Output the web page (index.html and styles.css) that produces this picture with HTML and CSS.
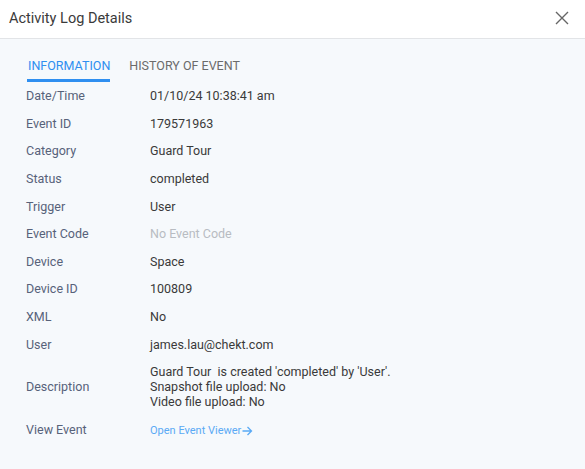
FILE: index.html
```html
<!DOCTYPE html>
<html>
<head>
<meta charset="utf-8">
<link rel="stylesheet" href="styles.css">
</head>
<body>
<div class="dialog">
  <div class="header">
    <div class="title">Activity Log Details</div>
    <svg class="close" width="14" height="14" viewBox="0 0 14 14"><path d="M1 1L13 13M13 1L1 13" stroke="#666" stroke-width="1.4" fill="none"/></svg>
  </div>
  <div class="body">
    <div class="tabs">
      <div class="tab active">INFORMATION</div>
      <div class="tab">HISTORY OF EVENT</div>
    </div>
    <div class="rows">
      <div class="row"><div class="label">Date/Time</div><div class="value">01/10/24 10:38:41 am</div></div>
      <div class="row"><div class="label">Event ID</div><div class="value">179571963</div></div>
      <div class="row"><div class="label">Category</div><div class="value">Guard Tour</div></div>
      <div class="row"><div class="label">Status</div><div class="value">completed</div></div>
      <div class="row"><div class="label">Trigger</div><div class="value">User</div></div>
      <div class="row"><div class="label">Event Code</div><div class="value muted">No Event Code</div></div>
      <div class="row"><div class="label">Device</div><div class="value">Space</div></div>
      <div class="row"><div class="label">Device ID</div><div class="value">100809</div></div>
      <div class="row"><div class="label">XML</div><div class="value">No</div></div>
      <div class="row"><div class="label">User</div><div class="value">james.lau@chekt.com</div></div>
      <div class="row desc"><div class="label">Description</div><div class="value">Guard Tour&nbsp; is created 'completed' by 'User'.<br>Snapshot file upload: No<br>Video file upload: No</div></div>
      <div class="row view"><div class="label">View Event</div><div class="value"><span class="link">Open Event Viewer<svg width="11" height="10" viewBox="0 0 11 10"><path d="M0.5 5H9.5M5.5 1L9.5 5L5.5 9" stroke="#5aaaf5" stroke-width="1.3" fill="none"/></svg></span></div></div>
    </div>
  </div>
</div>
</body>
</html>
```
FILE: styles.css
```css
* { box-sizing: border-box; }
html, body { margin: 0; padding: 0; }
body {
  font-family: Roboto, "Liberation Sans", sans-serif;
  width: 585px;
  height: 469px;
  overflow: hidden;
  background: #f6f9fc;
}
.dialog { display: flex; flex-direction: column; height: 469px; }
.header {
  height: 39px;
  background: #fff;
  border-bottom: 1px solid #e2e4e7;
  display: flex;
  align-items: center;
  justify-content: space-between;
  padding: 0 16px 0 9px;
}
.title { font-size: 14.5px; color: #3a3a3a; padding-bottom: 2px; }
.close { margin-top: -2px; }
.body { flex: 1; background: #f6f9fc; padding: 18px 0 0 0; }
.tabs { display: flex; padding-left: 27px; gap: 19px; }
.tab {
  font-size: 12.5px;
  color: #6b6b6b;
  height: 25px;
  padding-top: 2px;
  line-height: 14px;
}
.tab.active { color: #2f8ff0; border-bottom: 3px solid #2f8ff0; padding: 2px 0 0 1px; }
.rows { padding-left: 26px; padding-top: 0; }
.row { display: flex; align-items: center; height: 27.6px; font-size: 12.5px; }
.label { width: 124px; color: #57627a; }
.value { color: #3a3a3a; }
.muted { color: #b8bcc2; }
.row.desc { height: auto; padding: 6px 0 6px; line-height: 15px; }
.row.view { height: 30px; }
.link { color: #5aaaf5; font-size: 11px; display: inline-flex; align-items: center; gap: 1px; }
```
